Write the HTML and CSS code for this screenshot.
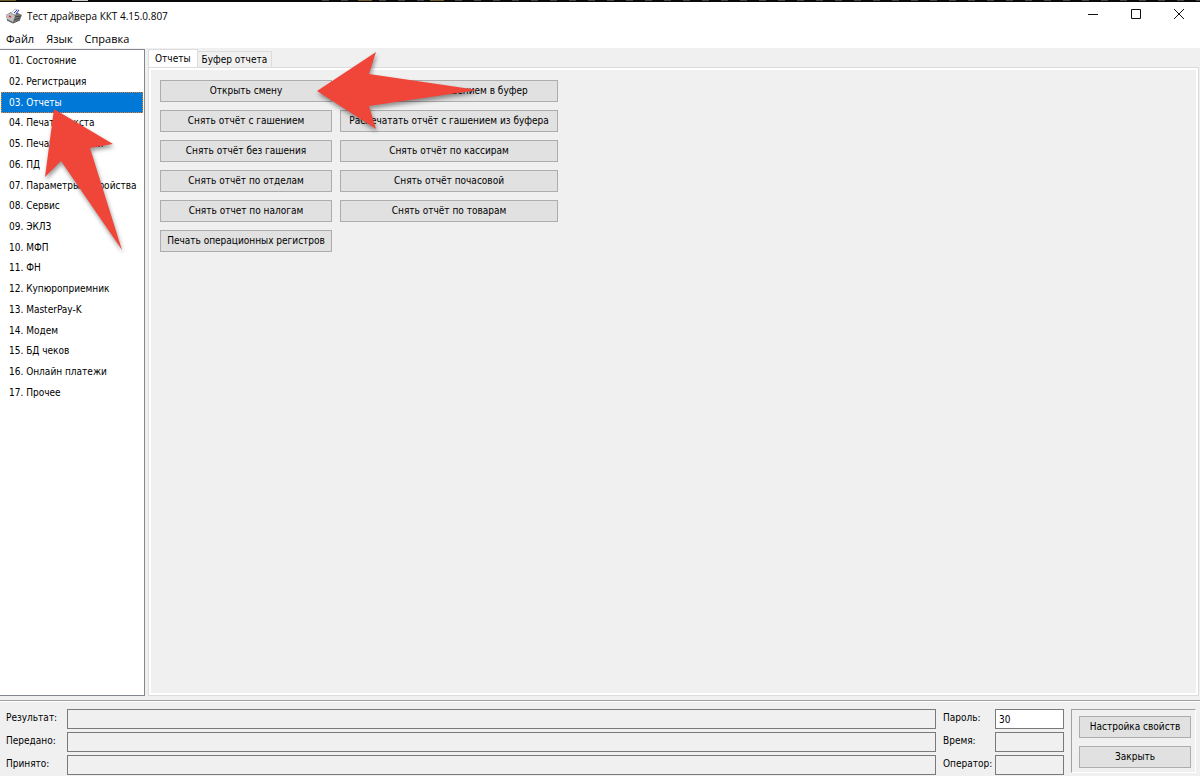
FILE: index.html
```html
<!DOCTYPE html>
<html lang="ru">
<head>
  <meta charset="UTF-8">
  <meta name="viewport" content="width=device-width, initial-scale=1.0">
  <title>Тест драйвера ККТ 4.15.0.807</title>
  <link rel="stylesheet" href="styles.css">
</head>
<body>
  <div class="desktop-strip"></div>

  <header class="titlebar">
    <svg class="app-icon" viewBox="0 0 16 16" aria-hidden="true">
      <path d="M0 7 L5 4 L12 5 L16 7 L14 12 L7 15 L1 12 Z" fill="#777"/>
      <path d="M0 7 L5 5 L9 8 L7 14 L1 11 Z" fill="#c0c0c0"/>
      <path d="M5 5 L9 1 L13 2 L9 7 Z" fill="#f4f4f4" stroke="#999" stroke-width=".5"/>
      <path d="M8 5 L11 2 M10 6 L13 2" stroke="#2b3ccc"/>
      <path d="M9 9 L15 8 M8 12 L14 10" stroke="#444"/>
      <path d="M1 12 L7 15 L14 12" fill="none" stroke="#555"/>
      <path d="M3 8 L5 9" stroke="#e03030" stroke-width="1.500"/>
    </svg>
    <h1>Тест драйвера ККТ 4.15.0.807</h1>
    <div class="window-controls">
      <button aria-label="Свернуть"><svg viewBox="0 0 10 10"><path d="M0 5.5H10"/></svg></button>
      <button aria-label="Развернуть"><svg viewBox="0 0 10 10"><path d="M.5 .5H9.500V9.500H.5Z"/></svg></button>
      <button aria-label="Закрыть окно"><svg viewBox="0 0 10 10"><path d="M0 0L10 10M10 0L0 10"/></svg></button>
    </div>
  </header>

  <nav class="menubar">
    <a href="#">Файл</a>
    <a href="#">Язык</a>
    <a href="#">Справка</a>
  </nav>

  <main class="workspace">
    <nav class="sidebar">
      <ul>
        <li><a href="#">01. Состояние</a></li>
        <li><a href="#">02. Регистрация</a></li>
        <li><a href="#" class="active">03. Отчеты</a></li>
        <li><a href="#">04. Печать текста</a></li>
        <li><a href="#">05. Печать графики</a></li>
        <li><a href="#">06. ПД</a></li>
        <li><a href="#">07. Параметры устройства</a></li>
        <li><a href="#">08. Сервис</a></li>
        <li><a href="#">09. ЭКЛЗ</a></li>
        <li><a href="#">10. МФП</a></li>
        <li><a href="#">11. ФН</a></li>
        <li><a href="#">12. Купюроприемник</a></li>
        <li><a href="#">13. MasterPay-K</a></li>
        <li><a href="#">14. Модем</a></li>
        <li><a href="#">15. БД чеков</a></li>
        <li><a href="#">16. Онлайн платежи</a></li>
        <li><a href="#">17. Прочее</a></li>
      </ul>
      <svg class="arrow arrow-up" viewBox="0 0 80 145" aria-hidden="true">
        <path d="M10 2 L69 37 L46 41 L78 143 L17 54 L1 70 Z"/>
      </svg>
    </nav>

    <section class="content">
      <div class="tabs">
        <button class="tab selected">Отчеты</button>
        <button class="tab">Буфер отчета</button>
      </div>
      <div class="panel">
        <div class="reports">
          <button>Открыть смену</button>
          <button>Снять отчёт с гашением в буфер</button>
          <button>Снять отчёт с гашением</button>
          <button>Распечатать отчёт с гашением из буфера</button>
          <button>Снять отчёт без гашения</button>
          <button>Снять отчёт по кассирам</button>
          <button>Снять отчёт по отделам</button>
          <button>Снять отчёт почасовой</button>
          <button>Снять отчет по налогам</button>
          <button>Снять отчёт по товарам</button>
          <button>Печать операционных регистров</button>
        </div>
        <svg class="arrow arrow-left" viewBox="0 0 165 80" aria-hidden="true">
          <path d="M1 40 L60 1 L53 23 L162 39 L53 55 L60 78 Z"/>
        </svg>
      </div>
    </section>
  </main>

  <footer class="status">
    <div class="fields log">
      <label for="result">Результат:</label>
      <input type="text" id="result" readonly>
      <label for="sent">Передано:</label>
      <input type="text" id="sent" readonly>
      <label for="received">Принято:</label>
      <input type="text" id="received" readonly>
    </div>
    <div class="fields params">
      <label for="password">Пароль:</label>
      <input type="text" id="password" class="editable" value="30">
      <label for="time">Время:</label>
      <input type="text" id="time" readonly>
      <label for="operator">Оператор:</label>
      <input type="text" id="operator" readonly>
    </div>
    <div class="actions">
      <button>Настройка свойств</button>
      <button>Закрыть</button>
    </div>
  </footer>
</body>
</html>
```
FILE: styles.css
```css
* {
  margin: 0;
  padding: 0;
  box-sizing: border-box;
}

body {
  height: 100vh;
  display: flex;
  flex-direction: column;
  overflow: hidden;
  background: #f0f0f0;
  color: #000;
  font: 10px/14px "DejaVu Sans Condensed", "Liberation Sans", sans-serif;
}

button,
input {
  font: inherit;
  color: inherit;
}

a {
  color: inherit;
  text-decoration: none;
}

/* Title bar and menu */
.desktop-strip {
  height: 2px;
  background:
    linear-gradient(#6b5a2a, #6b5a2a) 0 0 / 16px 1px no-repeat,
    linear-gradient(#c8c8c8, #c8c8c8) 72px 0 / 16px 1px no-repeat,
    linear-gradient(#6b5a2a, #6b5a2a) 358px 0 / 14px 1px no-repeat,
    linear-gradient(#6b5a2a, #6b5a2a) 430px 0 / 14px 1px no-repeat,
    repeating-linear-gradient(90deg, #444 0 7px, #0a0808 7px 19px) 322px 0 / 100% 1px no-repeat,
    #0a0808;
  flex: none;
}

.titlebar {
  height: 28px;
  display: flex;
  align-items: center;
  background: #fff;
  padding-left: 6px;
  flex: none;
}

.app-icon {
  width: 16px;
  height: 16px;
  margin-right: 5px;
}

.titlebar h1 {
  font: 10px/14px "Open Sans", "Noto Sans", sans-serif;
}

.window-controls {
  margin-left: auto;
  display: flex;
}

.window-controls button {
  width: 43px;
  height: 28px;
  border: none;
  background: none;
}

.window-controls svg {
  width: 10px;
  height: 10px;
  fill: none;
  stroke: #111;
}

.menubar {
  height: 18px;
  display: flex;
  align-items: center;
  gap: 12px;
  padding-left: 6px;
  background: #fff;
  font: 11px/14px "Open Sans", "Noto Sans", sans-serif;
  flex: none;
}

/* Main area */
.workspace {
  flex: 1;
  display: flex;
  gap: 3px;
  min-height: 0;
  padding: 1px 1px 4px 0;
}

.sidebar {
  position: relative;
  width: 145px;
  background: #fff;
  border: 1px solid #828790;
  border-left: none;
  flex: none;
}

.sidebar ul {
  list-style: none;
  display: grid;
  grid-template-columns: minmax(0, 1fr);
  grid-template-rows: repeat(17, 1fr);
  height: 352px;
  margin: 1px;
}

.sidebar a {
  display: flex;
  align-items: center;
  height: 100%;
  padding-left: 7px;
  border: 1px solid transparent;
  white-space: nowrap;
}

.sidebar a.active {
  background: #0078d7;
  color: #fff;
  border: 1px dotted #e08030;
}

.content {
  flex: 1;
  display: flex;
  flex-direction: column;
}

.tabs {
  display: flex;
  align-items: flex-end;
  height: 18px;
}

.tab {
  height: 16px;
  padding: 0 4px;
  border: 1px solid #dcdcdc;
  border-left: none;
  border-bottom: none;
  background: #f0f0f0;
}

.tab.selected {
  height: 18px;
  padding: 0 6px;
  border-left: 1px solid #dcdcdc;
  background: #fff;
}

.panel {
  position: relative;
  flex: 1;
  border: 1px solid #dcdcdc;
  outline: 2px solid #fff;
  outline-offset: -3px;
  padding: 12px 11px;
}

.reports {
  display: grid;
  grid-template-columns: 172px 218px;
  grid-auto-rows: 22px;
  gap: 8px;
}

.reports button,
.actions button {
  background: #e1e1e1;
  border: 1px solid #adadad;
  white-space: nowrap;
}

/* Pointer arrows */
.arrow {
  position: absolute;
  z-index: 2;
  fill: #f04639;
  filter: drop-shadow(1px 3px 2px rgba(0, 0, 0, 0.4));
}

.arrow-up {
  left: 44px;
  top: 57px;
  width: 80px;
  height: 145px;
}

.arrow-left {
  left: 167px;
  top: -17px;
  width: 165px;
  height: 80px;
}

/* Bottom panel */
.status {
  display: flex;
  align-items: flex-start;
  gap: 7px;
  padding: 8px 4px 1px 6px;
  border-top: 1px solid #a0a0a0;
  box-shadow: inset 0 1px #fff;
  flex: none;
}

.fields {
  display: grid;
  row-gap: 3px;
}

.fields label {
  line-height: 17px;
  white-space: nowrap;
}

.fields input {
  width: 100%;
  height: 20px;
  padding: 0 3px;
  border: 1px solid #7a7a7a;
  background: #f0f0f0;
}

.fields input.editable {
  background: #fff;
}

.log {
  flex: 1;
  grid-template-columns: 61px 1fr;
}

.params {
  grid-template-columns: 52px 69px;
}

.actions {
  display: grid;
  gap: 8px;
  width: 125px;
  padding: 6px 4px 4px 7px;
  border: 1px solid #a0a0a0;
  border-right-color: #fff;
  border-bottom-color: #fff;
}

.actions button {
  height: 22px;
}
```
